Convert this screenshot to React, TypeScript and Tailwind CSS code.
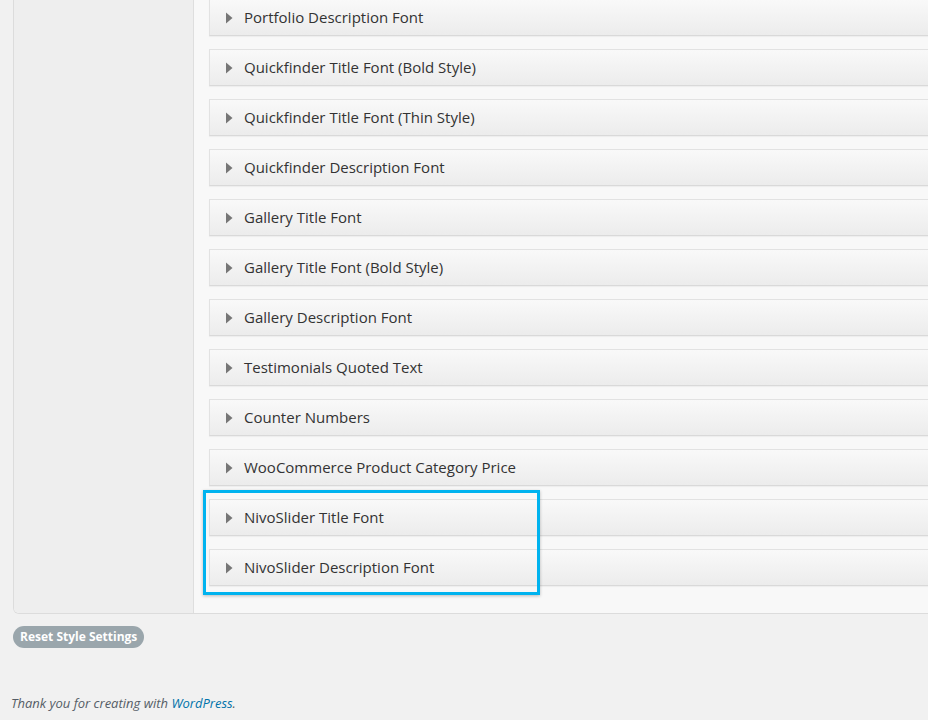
import React from "react";

const groups = [
  "Portfolio Description Font",
  "Quickfinder Title Font (Bold Style)",
  "Quickfinder Title Font (Thin Style)",
  "Quickfinder Description Font",
  "Gallery Title Font",
  "Gallery Title Font (Bold Style)",
  "Gallery Description Font",
  "Testimonials Quoted Text",
  "Counter Numbers",
  "WooCommerce Product Category Price",
];

const highlighted = ["NivoSlider Title Font", "NivoSlider Description Font"];

function Arrow() {
  return (
    <svg width="7" height="12" viewBox="0 0 7 12" className="shrink-0">
      <path d="M0 0.5 L6.5 6 L0 11.5 Z" fill="#767676" />
    </svg>
  );
}

function FontItem({ title }: { title: string }) {
  return (
    <div className="flex h-[37px] items-center gap-[11px] border border-[#e2e2e2] border-b-[#d9d9d9] bg-gradient-to-b from-[#f9f9f9] to-[#ececec] pl-[16px] shadow-[0_1px_1px_rgba(0,0,0,0.04)]">
      <Arrow />
      <span className="text-[15px] text-[#333]">{title}</span>
    </div>
  );
}

export default function App() {
  return (
    <div
      className="h-[720px] w-[928px] overflow-hidden bg-[#f1f1f1]"
      style={{ fontFamily: '"Open Sans", "Noto Sans", sans-serif' }}
    >
      <div className="ml-[13px] w-[960px]">
        {/* settings panel */}
        <div className="-mt-[12px] flex overflow-hidden rounded-bl-[6px] border border-t-0 border-[#dcdcdc] bg-[#f8f8f8]">
          <div className="w-[180px] shrink-0 border-r border-[#dedede] bg-[#eeeeee]" />
          <div className="flex flex-1 flex-col gap-[13px] pb-[27px] pl-[15px] pt-[11px]">
            {groups.map((g) => (
              <FontItem key={g} title={g} />
            ))}
            <div className="relative flex flex-col gap-[13px]">
              {highlighted.map((g) => (
                <FontItem key={g} title={g} />
              ))}
              <div className="absolute -top-[9px] -bottom-[9px] -left-[6px] w-[337px] border-[3px] border-[#00b3ef] shadow-[0_1px_3px_rgba(0,0,0,0.25)]" />
            </div>
          </div>
        </div>

        <button className="mt-[12px] h-[22px] rounded-full bg-[#9aa6ac] px-[7px] text-[12px] font-bold text-white">
          Reset Style Settings
        </button>

        <p className="-ml-[2px] mt-[46px] text-[13px] italic text-[#555d66]">
          Thank you for creating with <span className="text-[#0073aa]">WordPress</span>.
        </p>
      </div>
    </div>
  );
}
